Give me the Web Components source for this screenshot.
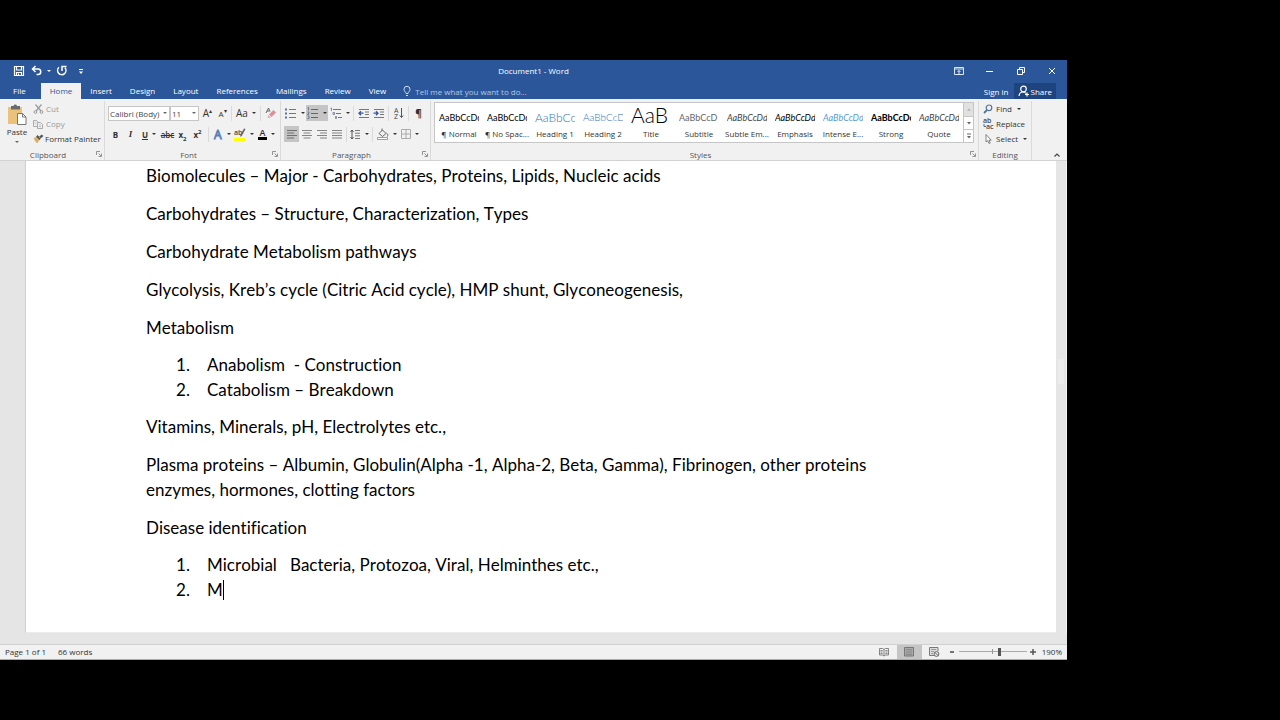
<!DOCTYPE html>
<html lang="en">
<head>
<meta charset="utf-8">
<title>Document1 - Word</title>
<style>
html,body{margin:0;height:100%;background:#000}
body{font-family:"Open Sans","Noto Sans",sans-serif;font-size:8px;color:#333}
</style>
</head>
<body>
<word-app></word-app>
<script>
const ICONS = {
  save: [12,12,'<path d="M1.5 1.5h9v9h-9zM3.5 1.5v3.500h5v-3.500M3.500 10.500v-3h5v3M5.500 10v-1.500" fill="none" stroke="#fff" stroke-width="1.200"/>'],
  undo: [12,12,'<path d="M4.500 1L1.500 4l3 3M2 4h5a2.700 2.700 0 0 1 0 5.500H5.500" fill="none" stroke="#fff" stroke-width="1.500"/>'],
  redo: [12,12,'<path d="M3 2.300a4.200 4.200 0 1 0 6 .4M6 6V1.500h4.500" fill="none" stroke="#fff" stroke-width="1.500"/>'],
  more: [6,8,'<path d="M1 2.500h4" stroke="#fff"/><path d="M1 4.500h4l-2 2.500z" fill="#fff"/>'],
  display: [12,10,'<path d="M1.500 1.500h9v7h-9zM1.500 3h9M6 8V4.500M4.500 6L6 4.500 7.500 6" fill="none" stroke="#dfe8f5"/>'],
  min: [10,10,'<path d="M1 5.500h7" stroke="#fff"/>'],
  restore: [10,10,'<path d="M1.500 3.500h5v5h-5zM3.500 3.500v-2h5v5h-2" fill="none" stroke="#fff"/>'],
  close: [10,10,'<path d="M2 2l6 6M8 2l-6 6" stroke="#fff"/>'],
  bulb: [8,12,'<path d="M3 8.500C3 7 1 6.500 1 4.300a3 3 0 0 1 6 0C7 6.500 5 7 5 8.500zM3 10.500h2" fill="none" stroke="#cddcf0"/>'],
  person: [12,12,'<circle cx="5.500" cy="4" r="2.800" fill="none" stroke="#fff" stroke-width="1.200"/><path d="M1 11c.3-2.500 2-4 4-4 1.300 0 2.200.5 3 1.500M9 7.500v4M7 9.500h4" fill="none" stroke="#fff" stroke-width="1.200"/>'],
  paste: [20,22,'<path d="M1 3h14v17H1z" fill="#eac27b"/><path d="M4 2h2.500a1.800 1.800 0 0 1 3.500 0H13v3.500H4z" fill="#6a6a6a"/><path d="M10.500 9.500h5l3.500 3.500v7.500h-8.500z" fill="#fff" stroke="#777"/><path d="M15.500 9.500V13H19" fill="none" stroke="#777"/>'],
  cut: [12,10,'<path d="M2.500.5l5.500 6.500M8.500.5L3 7" stroke="#999" fill="none" stroke-width="1.200"/><circle cx="2.500" cy="8" r="1.400" fill="none" stroke="#999"/><circle cx="8.500" cy="8" r="1.400" fill="none" stroke="#999"/>'],
  copy: [12,10,'<path d="M.5 1.500h3l2 2v4h-5z" fill="#eee" stroke="#aaa"/><path d="M4.500 3.500h3l2 2v4h-5z" fill="#eee" stroke="#aaa"/><path d="M6 6h2M6 7.500h2M1.500 4h2" stroke="#aaa" stroke-width=".6"/>'],
  painter: [11,10,'<path d="M.5 4l4-1.500 2.500 2.500-2.500 4-1.500-.5L.5 4z" fill="#dcae63"/><path d="M3 2.500L6.500 6 8 4.500 4.500 1zM6 3l2.500-2.500L10.500 2 7.500 4.500z" fill="#555"/>'],
  outlineA: [10,11,'<text x="1" y="9.500" font-size="12" fill="#fff" stroke="#5580bd" stroke-width=".9">A</text>'],
  eraser: [12,12,'<path d="M1 6L3.500 1 5 4.500M2 4h2.500" stroke="#666" fill="none"/><path d="M4 7.500L8.500 3 11 5.500 6.500 10z" fill="#e58a9b"/><path d="M3.500 8L6 10.500 5 11H3L2.500 9.500z" fill="#efb2bd"/>'],
  hilite: [12,13,'<path d="M0 10h11v3H0z" fill="#ff0"/><text x="0" y="7" font-size="7" font-weight="600" fill="#444">ab</text><path d="M11.500 1L8 7.500 6 9l.5-2.500L10 .5z" fill="#666"/>'],
  bullets: [12,12,'<path d="M4 2.500h7M4 6.500h7M4 10.500h7" stroke="#777"/><path d="M0 1.500h2v2H0zM0 5.500h2v2H0zM0 9.500h2v2H0z" fill="#5b7299"/>'],
  numbers: [12,12,'<path d="M4 2.500h7M4 6.500h7M4 10.500h7" stroke="#666"/><path d="M.500 1l1-.500v3M.500 5h1.500v1L.5 7.500H2M.500 9h1.500v2.500H.5" fill="none" stroke="#5b6a80" stroke-width=".8"/>'],
  multi: [12,12,'<path d="M3 2.500h8M6 6.500h5M8 10.500h4" stroke="#777"/><path d="M.500 1.500l1-.500v3M3 5.500h1.500v2H3zM5.500 9.500h1v2h-1z" fill="none" stroke="#68758a" stroke-width=".8"/>'],
  outdent: [12,11,'<path d="M1 1.500h10M7 4h4M7 6.500h4M1 9.500h10" stroke="#777"/><path d="M5.500 5.200H1M3 3.200l-2 2 2 2" stroke="#3655a5" stroke-width="1.300" fill="none"/>'],
  indent: [12,11,'<path d="M1 1.500h10M7 4h4M7 6.500h4M1 9.500h10" stroke="#777"/><path d="M.500 5.200H5M3 3.200l2 2-2 2" stroke="#3655a5" stroke-width="1.300" fill="none"/>'],
  sort: [10,12,'<text x="0" y="5.500" font-size="7" fill="#444">A</text><text x="0" y="12" font-size="7" fill="#444">Z</text><path d="M7.500 1v9.500M5.800 8.500l1.700 2 1.700-2" stroke="#555" fill="none"/>'],
  left: [10,10,'<path d="M0 1.500h10M0 4h7M0 6.500h10M0 9h7" stroke="#666" stroke-width=".9"/>'],
  center: [10,10,'<path d="M0 1.500h10M1.500 4h7M0 6.500h10M1.500 9h7" stroke="#777" stroke-width=".9"/>'],
  right: [10,10,'<path d="M0 1.500h10M3 4h7M0 6.500h10M3 9h7" stroke="#777" stroke-width=".9"/>'],
  justify: [10,10,'<path d="M0 1.500h10M0 4h10M0 6.500h10M0 9h10" stroke="#777" stroke-width=".9"/>'],
  spacing: [11,11,'<path d="M5 1.500h5M5 4.200h5M5 6.800h5M5 9.500h5" stroke="#777"/><path d="M2 1v9M.500 3L2 1l1.500 2M.500 8L2 10l1.500-2" stroke="#555" fill="none"/>'],
  shade: [12,12,'<path d="M2 5.500L5.500 2 9 5.500 5.500 8.500zM5 3V.5" stroke="#666" fill="none"/><path d="M9.500 5c1.500 1 1.500 2 1 3.500" stroke="#666" fill="none"/><path d="M.500 9.500h10v2H.500z" fill="#fff" stroke="#888" stroke-width=".8"/>'],
  borders: [10,10,'<path d="M.500.500h9v9h-9zM5 .500v9M.500 5h9" stroke="#aaa" fill="none"/>'],
  find: [12,10,'<circle cx="6" cy="3.800" r="2.800" fill="none" stroke="#54749c" stroke-width="1.200"/><path d="M4 6L1 9" stroke="#54749c" stroke-width="1.800"/>'],
  replace: [12,11,'<text x="0" y="5" font-size="7" font-weight="600" fill="#444">ab</text><text x="3" y="11" font-size="7" font-weight="600" fill="#444">ac</text><path d="M1 6v2.500h2" stroke="#3f6baa" fill="none"/>'],
  select: [12,10,'<path d="M3 .500v7.500l1.700-1.500L6 9.500l1.200-.5L6 6.200h2.200z" fill="#fff" stroke="#777" stroke-width=".9"/>'],
  launch: [6,6,'<path d="M.500 4V.500H4M2.500 2.500L5 5M5.500 2.500v3h-3" stroke="#888" fill="none" stroke-width=".9"/>'],
  up: [6,4,'<path d="M.500 3.500L3 1l2.500 2.500" stroke="#444" fill="none" stroke-width="1.200"/>'],
  triup: [4,3,'<path d="M0 3h4L2 0z" fill="#bbb"/>'],
  tridown: [4,3,'<path d="M0 0h4L2 2.500z" fill="#666"/>'],
  expand: [6,6,'<path d="M1 1h4" stroke="#666"/><path d="M1 3h4L3 5.500z" fill="#666"/>'],
  read: [10,10,'<path d="M.500 1.500h3L5 2.500l1.500-1h3v6.500h-3L5 9 3.500 8h-3zM5 2.500V9M1.500 3.500h2M1.500 5h2M1.500 6.500h2M6.500 3.500h2M6.500 5h2M6.500 6.500h2" fill="none" stroke="#777" stroke-width=".9"/>'],
  print: [10,10,'<path d="M.500.500h9v8.500h-9z" fill="#aaa" stroke="#777"/><path d="M2 2.500h6M2 4.200h6M2 5.900h6M2 7.500h6" stroke="#858585" stroke-width=".8"/>'],
  web: [11,10,'<path d="M9 4V.500H.500v8H5" fill="#ddd" stroke="#777"/><path d="M2 2.500h5M2 4.500h3M2 6.500h2" stroke="#888" stroke-width=".8"/><circle cx="7.500" cy="7" r="2.400" fill="#eee" stroke="#666"/><path d="M5.800 5.300l3.400 3.400" stroke="#666"/>'],
  minus: [6,6,'<path d="M1 3h4" stroke="#555" stroke-width="1.600"/>'],
  plus: [6,6,'<path d="M0 3h6M3 0v6" stroke="#555" stroke-width="1.500"/>']
};

function define(name, html, setup){
  const template = document.createElement('template');
  template.innerHTML = '<style>*,:host{box-sizing:border-box}:host{display:block}button{font:inherit;color:inherit;background:none;border:0;padding:0;margin:0}</style>' + html;
  customElements.define(name, class extends HTMLElement{
    connectedCallback(){
      if(this.shadowRoot) return;
      this.attachShadow({mode:'open'}).append(template.content.cloneNode(true));
      if(setup) setup(this, this.shadowRoot);
    }
  });
}

define('word-icon','<style>:host{flex:none;line-height:0}svg{display:block;overflow:visible}</style><span></span>',(el,root)=>{
  const [w,h,body] = ICONS[el.getAttribute('name')];
  root.querySelector('span').innerHTML = `<svg width="${w}" height="${h}" viewBox="0 0 ${w} ${h}" aria-hidden="true">${body}</svg>`;
});

/* Command button: icon or slotted text, optional drop-down arrow. */
define('tool-button',`<style>
:host{flex:none;width:var(--w,15px);height:16px}
button{width:100%;height:100%;display:flex;align-items:center;justify-content:center;gap:4px;white-space:nowrap}
:host([wide]){height:15px}
:host([wide]) button{justify-content:flex-start;gap:1px}
:host([wide]) i{margin-left:4px}
:host([on]){background:#c5c5c5}
:host([off]){color:#999}
i{display:none;border:2px solid transparent;border-top-color:currentColor;border-bottom:0;flex:none}
:host([menu]) i{display:block}
</style><button type="button"><slot></slot><i></i></button>`,(el,root)=>{
  const label = el.getAttribute('label');
  if(label) root.querySelector('button').setAttribute('aria-label',label);
  const name = el.getAttribute('icon');
  if(name){
    const icon = document.createElement('word-icon');
    icon.setAttribute('name',name);
    root.querySelector('slot').replaceWith(icon, ...(el.textContent.trim() ? [document.createElement('slot')] : []));
  }
});

define('tool-sep','<style>:host{flex:none;width:1px;height:15px;background:#dadada;margin:0 var(--m,2px)}</style>');

define('ribbon-group',`<style>
:host{display:flex;flex-direction:column;flex:0 0 var(--group);border-right:1px solid #dadada;margin:2px 0 0;min-width:0}
.body{flex:1;min-height:0}
footer{display:flex;align-items:center;height:12px;color:#555;padding:0 2px 0 0}
span{flex:1;text-align:center}
:host([plain]) footer{padding:0}
:host([plain]) word-icon{display:none}
</style><div class="body"><slot></slot></div><footer><span></span><word-icon name="launch"></word-icon></footer>`,(el,root)=>{
  root.querySelector('span').textContent = el.getAttribute('caption');
});

define('combo-box',`<style>
:host{flex:none;width:var(--combo);height:15px;position:relative}
select{appearance:none;width:100%;height:100%;font:inherit;color:#444;background:#fff;border:1px solid #c6c6c6;border-radius:0;padding:0 0 0 1px;margin:0}
i{position:absolute;right:3px;top:6px;border:2px solid transparent;border-top-color:#666;border-bottom:0;pointer-events:none}
</style><select><option></option></select><i></i>`,(el,root)=>{
  root.querySelector('select').setAttribute('aria-label',el.getAttribute('label'));
  root.querySelector('option').textContent = el.getAttribute('value');
});

define('style-tile',`<style>
:host{min-width:0;height:100%}
button{width:100%;height:100%;display:flex;flex-direction:column;align-items:center}
b{font:var(--face,400 9px Lato,"Open Sans",sans-serif);color:var(--ink,#000);width:40px;height:26px;line-height:29px;overflow:hidden;white-space:nowrap;text-align:left}
span{line-height:10px;white-space:nowrap}
:host([big]) b{line-height:24px}
</style><button type="button"><b></b><span><slot></slot></span></button>`,(el,root)=>{
  root.querySelector('b').textContent = el.getAttribute('sample') || 'AaBbCcDd';
});

define('title-bar',`<style>
:host{display:grid;grid-template-columns:1fr auto 1fr;align-items:center;height:23px;background:#2b579a;color:#fff;padding-bottom:2px}
div{display:flex;align-items:center}
.quick{padding-left:11px}
.win{justify-content:flex-end}
h1{font:inherit;margin:0}
</style>
<div class="quick"><tool-button icon="save" label="Save" style="--w:16px"></tool-button><tool-button icon="undo" label="Undo" style="--w:28px" menu></tool-button><tool-button icon="redo" label="Repeat" style="--w:14px"></tool-button><tool-button icon="more" label="Customize Quick Access Toolbar" style="--w:24px"></tool-button></div>
<h1>Document1 - Word</h1>
<div class="win"><tool-button icon="display" label="Ribbon Display Options" style="--w:31px"></tool-button><tool-button icon="min" label="Minimize" style="--w:31px"></tool-button><tool-button icon="restore" label="Restore" style="--w:31px"></tool-button><tool-button icon="close" label="Close" style="--w:31px"></tool-button></div>`);

define('tab-strip',`<style>
:host{display:flex;height:16px;background:#2b579a;color:#fff;padding:0 11px 0 3px;justify-content:space-between}
nav,.right{display:flex}
a{color:inherit;text-decoration:none;padding:0 9px;line-height:16px;height:16px;white-space:nowrap}
a.file{padding:0 15px 0 10px}
a.on{background:#f1f1f1;color:#2b579a}
.tell{display:flex;align-items:center;gap:4px;margin-left:8px}
input{font:inherit;color:#fff;background:none;border:0;padding:0;margin:0;width:130px;height:16px;outline:0}
input::placeholder{color:#b5c8e4;opacity:1}
.right{align-items:center;gap:5px}
.share{display:flex;align-items:center;gap:1px;background:#1e4480;height:16px;padding:0 4px}
</style>
<nav><a class="file" href="#file">File</a><a class="on" href="#home">Home</a><a href="#insert">Insert</a><a href="#design">Design</a><a href="#layout">Layout</a><a href="#references">References</a><a href="#mailings">Mailings</a><a href="#review">Review</a><a href="#view">View</a>
<label class="tell"><word-icon name="bulb"></word-icon><input type="text" aria-label="Tell me" placeholder="Tell me what you want to do..."></label></nav>
<div class="right"><button type="button">Sign in</button><button type="button" class="share"><word-icon name="person"></word-icon>Share</button></div>`);

define('ribbon-bar',`<style>
:host{display:flex;height:62px;background:#f1f1f1;border-bottom:1px solid #d2d2d2}
.row{display:flex;align-items:center;height:16px}
.two{display:grid;gap:5px;padding:4px 0 0 3px}
.clip{display:flex;padding:0 0 0 5px;gap:4px}
.paste{display:flex;flex-direction:column;align-items:center;width:24px;padding-top:3px}
.paste span{line-height:11px}
.paste i{border:2px solid transparent;border-top-color:#666;border-bottom:0;margin-top:4px}
.stack{display:flex;flex-direction:column}
.edit{padding-left:4px}
.styles{display:flex;margin:1px 4px 0 3px;height:41px;border:1px solid #c6c6c6;background:#fff}
.tiles{flex:1;display:grid;grid-template-columns:repeat(11,minmax(0,1fr))}
.scroll{display:grid;grid-template-rows:repeat(3,1fr);width:10px;border-left:1px solid #c6c6c6}
.scroll button{display:grid;place-items:center}
.scroll button+button{border-top:1px solid #c6c6c6}
.scroll button:first-child{background:#e1e1e1}
.collapse{flex:0 0 35px;align-self:flex-end;display:grid;justify-items:end;padding:3px 7px}
sup,sub{font-size:6px;line-height:0}
.ltr{font-size:10px}
.it{font:italic 700 9px "Liberation Serif",serif}
.col{border-bottom:3px solid #000;line-height:9px;font-weight:600;padding:0 2px;font-size:9px}
u{font-weight:700}
s{font-weight:600}
</style>
<ribbon-group caption="Clipboard" style="--group:105px">
 <div class="clip">
  <button type="button" class="paste"><word-icon name="paste"></word-icon><span>Paste</span><i></i></button>
  <div class="stack"><tool-button wide off icon="cut" style="--w:70px">Cut</tool-button><tool-button wide off icon="copy" style="--w:70px">Copy</tool-button><tool-button wide icon="painter" style="--w:70px">Format Painter</tool-button></div>
 </div>
</ribbon-group>
<ribbon-group caption="Font" style="--group:176px">
 <div class="two">
 <div class="row"><combo-box label="Font" value="Calibri (Body)" style="--combo:62px"></combo-box><combo-box label="Font size" value="11" style="--combo:29px"></combo-box>
  <tool-button label="Grow font" style="--w:17px"><span class="ltr">A<sup>▴</sup></span></tool-button><tool-button label="Shrink font" style="--w:13px"><span>A<sup>▾</sup></span></tool-button><tool-sep></tool-sep>
  <tool-button menu label="Change case" style="--w:24px"><span class="ltr">Aa</span></tool-button><tool-sep></tool-sep><tool-button icon="eraser" label="Clear formatting"></tool-button></div>
 <div class="row"><tool-button label="Bold"><b>B</b></tool-button><tool-button label="Italic"><span class="it">I</span></tool-button><tool-button menu label="Underline" style="--w:22px"><u>U</u></tool-button><tool-button label="Strikethrough" style="--w:15px"><s>abc</s></tool-button><tool-button label="Subscript"><b>x<sub>2</sub></b></tool-button><tool-button label="Superscript"><b>x<sup>2</sup></b></tool-button><tool-sep style="--m:3px"></tool-sep>
  <tool-button menu icon="outlineA" label="Text effects" style="--w:20px"></tool-button><tool-button menu icon="hilite" label="Text highlight color" style="--w:23px"></tool-button><tool-button menu label="Font color" style="--w:23px"><span class="col">A</span></tool-button></div>
 </div>
</ribbon-group>
<ribbon-group caption="Paragraph" style="--group:150px">
 <div class="two">
 <div class="row"><tool-button menu icon="bullets" label="Bullets" style="--w:22px"></tool-button><tool-button on menu icon="numbers" label="Numbering" style="--w:22px"></tool-button><tool-button menu icon="multi" label="Multilevel list" style="--w:23px"></tool-button><tool-sep></tool-sep><tool-button icon="outdent" label="Decrease indent"></tool-button><tool-button icon="indent" label="Increase indent"></tool-button><tool-sep></tool-sep><tool-button icon="sort" label="Sort"></tool-button><tool-sep></tool-sep><tool-button label="Show marks"><b class="ltr">¶</b></tool-button></div>
 <div class="row"><tool-button on icon="left" label="Align left"></tool-button><tool-button icon="center" label="Center"></tool-button><tool-button icon="right" label="Align right"></tool-button><tool-button icon="justify" label="Justify"></tool-button><tool-sep></tool-sep><tool-button menu icon="spacing" label="Line spacing" style="--w:21px"></tool-button><tool-sep></tool-sep><tool-button menu icon="shade" label="Shading" style="--w:24px"></tool-button><tool-button menu icon="borders" label="Borders" style="--w:22px"></tool-button></div>
 </div>
</ribbon-group>
<ribbon-group caption="Styles" style="flex:1 1 0">
 <div class="styles"><div class="tiles">
  <style-tile>¶ Normal</style-tile><style-tile>¶ No Spac...</style-tile>
  <style-tile style="--face:300 12px Lato,sans-serif;--ink:#2e74b5" sample="AaBbCc">Heading 1</style-tile>
  <style-tile style="--face:300 10px Lato,sans-serif;--ink:#2e74b5" sample="AaBbCcD">Heading 2</style-tile>
  <style-tile big style="--face:300 21px Lato,sans-serif" sample="AaB">Title</style-tile>
  <style-tile style="--ink:#666" sample="AaBbCcD">Subtitle</style-tile>
  <style-tile style="--face:italic 400 9px Lato,sans-serif;--ink:#444">Subtle Em...</style-tile>
  <style-tile style="--face:italic 400 9px Lato,sans-serif">Emphasis</style-tile>
  <style-tile style="--face:italic 400 9px Lato,sans-serif;--ink:#5b9bd5">Intense E...</style-tile>
  <style-tile style="--face:700 9px Lato,sans-serif">Strong</style-tile>
  <style-tile style="--face:italic 400 9px Lato,sans-serif;--ink:#444">Quote</style-tile>
 </div><div class="scroll"><button type="button" aria-label="Row up"><word-icon name="triup"></word-icon></button><button type="button" aria-label="Row down"><word-icon name="tridown"></word-icon></button><button type="button" aria-label="More styles"><word-icon name="expand"></word-icon></button></div></div>
</ribbon-group>
<ribbon-group caption="Editing" plain style="--group:53px">
 <div class="stack edit"><tool-button wide menu icon="find" style="--w:46px">Find</tool-button><tool-button wide icon="replace" style="--w:46px">Replace</tool-button><tool-button wide menu icon="select" style="--w:46px">Select</tool-button></div>
</ribbon-group>
<button type="button" class="collapse" aria-label="Collapse the ribbon"><word-icon name="up"></word-icon></button>`);

define('doc-page',`<style>
:host{flex:1;min-height:0;background:#e5e5e5;padding:0 0 11px 25px;display:flex;overflow:hidden}
article{flex:1;min-width:0;background:#fff;border-left:1px solid #cfcfcf;border-bottom:1px solid #ececec;padding:2px 120px 0;color:#000;font:17px/25px Lato,"Open Sans",sans-serif;font-variant-ligatures:none;font-kerning:none}
p,h2,ol{margin:0 0 13px;font:inherit;font-variant-ligatures:none;font-kerning:none}
h2,ol{margin-bottom:12px}
ol{padding-left:61px;list-style:none;counter-reset:n}
li{counter-increment:n;white-space:pre-wrap;display:flex}
li::before{content:counter(n) ".";margin-left:-31px;width:31px;flex:none}
i{width:1px;height:20px;background:#000;align-self:center}
.bar{width:11px;padding:198px 2px 0;border-right:1px solid #f4f4f4}
.thumb{height:25px;background:#ebebeb}
</style><article>
<p>Biomolecules – Major - Carbohydrates, Proteins, Lipids, Nucleic acids</p>
<p>Carbohydrates – Structure, Characterization, Types</p>
<p>Carbohydrate Metabolism pathways</p>
<p>Glycolysis, Kreb’s cycle (Citric Acid cycle), HMP shunt, Glyconeogenesis,</p>
<h2>Metabolism</h2>
<ol><li>Anabolism  - Construction</li><li>Catabolism – Breakdown</li></ol>
<p>Vitamins, Minerals, pH, Electrolytes etc.,</p>
<p>Plasma proteins – Albumin, Globulin(Alpha -1, Alpha-2, Beta, Gamma), Fibrinogen, other proteins<br>enzymes, hormones, clotting factors</p>
<h2>Disease identification</h2>
<ol><li>Microbial   Bacteria, Protozoa, Viral, Helminthes etc.,</li><li>M<i></i></li></ol>
</article><div class="bar"><div class="thumb"></div></div>`);

define('status-bar',`<style>
:host{display:flex;justify-content:space-between;align-items:center;height:16px;background:#f1f1f1;border-top:1px solid #d0d0d0;border-bottom:1px solid #aaa;padding:0 5px 1px}
div{display:flex;align-items:center}
.info{gap:12px}
tool-button{height:14px;--w:25px}
input{appearance:none;width:68px;height:10px;margin:0 2px;background:linear-gradient(#999,#999) 50% 50%/1px 5px no-repeat,linear-gradient(#aaa,#aaa) 0 50%/100% 1px no-repeat}
input::-webkit-slider-thumb{appearance:none;width:3px;height:8px;background:#555}
output{margin-left:5px}
</style><div class="info"><span>Page 1 of 1</span><span>66 words</span></div>
<div><tool-button icon="read" label="Read mode"></tool-button><tool-button on icon="print" label="Print layout"></tool-button><tool-button icon="web" label="Web layout"></tool-button><tool-button icon="minus" label="Zoom out" style="--w:10px"></tool-button><input type="range" aria-label="Zoom" min="0" max="100" value="60"><tool-button icon="plus" label="Zoom in" style="--w:8px"></tool-button><output>190%</output></div>`);

define('word-app',`<style>
:host{display:flex;flex-direction:column;height:100vh;padding:60px 213px 60px 0}
</style><title-bar></title-bar><tab-strip></tab-strip><ribbon-bar></ribbon-bar><doc-page></doc-page><status-bar></status-bar>`);
</script>
</body>
</html>
